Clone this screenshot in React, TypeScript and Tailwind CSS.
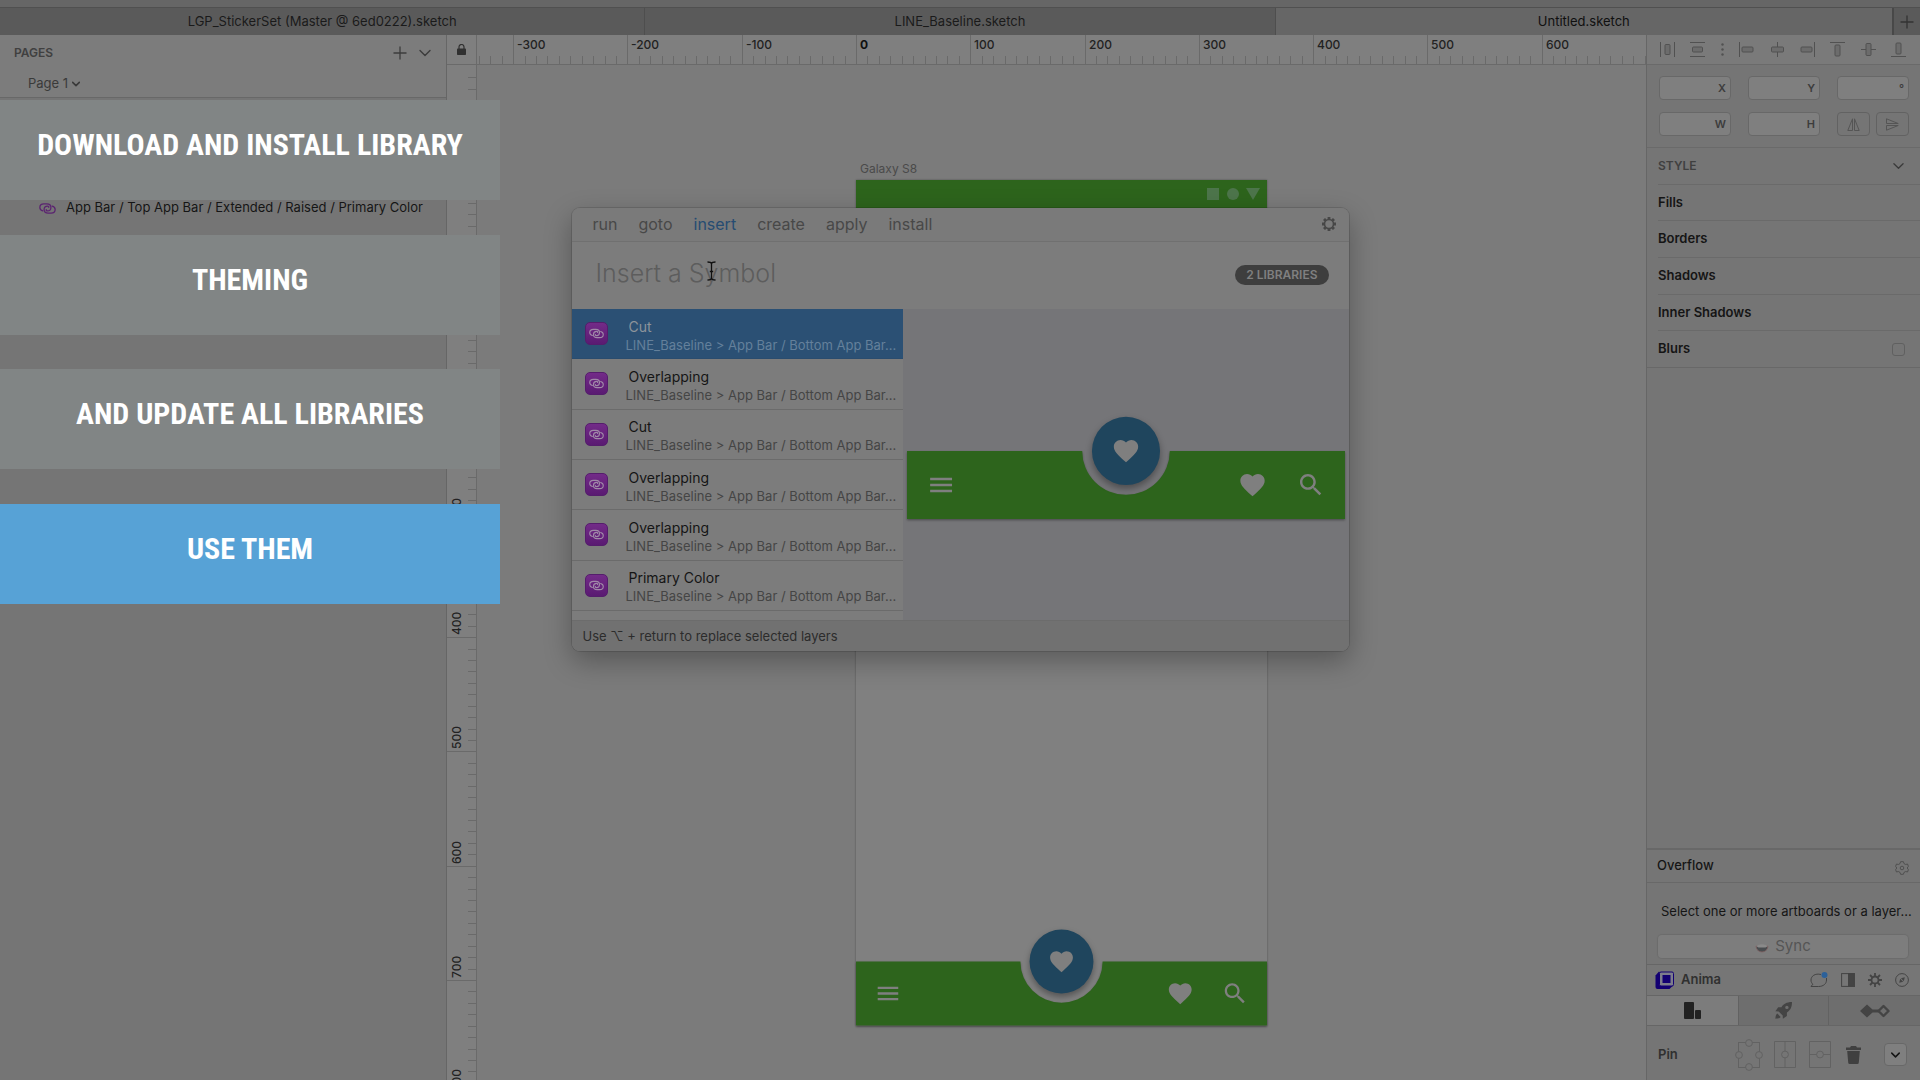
import React from "react";

const MENU = "M3 18h18v-2H3v2zm0-5h18v-2H3v2zm0-7v2h18V6H3z";
const HEART =
  "M12 21.35l-1.45-1.32C5.4 15.36 2 12.28 2 8.5 2 5.42 4.42 3 7.5 3c1.74 0 3.41.81 4.5 2.09C13.09 3.81 14.76 3 16.5 3 19.58 3 22 5.42 22 8.5c0 3.78-3.4 6.86-8.55 11.54L12 21.35z";
const SEARCH =
  "M15.5 14h-.79l-.28-.27C15.41 12.59 16 11.11 16 9.5 16 5.91 13.09 3 9.5 3S3 5.91 3 9.5 5.91 16 9.5 16c1.61 0 3.09-.59 4.23-1.57l.27.28v.79l5 4.99L20.49 19l-4.99-5zm-6 0C7.01 14 5 11.99 5 9.5S7.01 5 9.5 5 14 7.01 14 9.5 11.99 14 9.5 14z";

function BottomAppBar() {
  return (
    <svg viewBox="0 -32 360 92" className="block w-full overflow-visible" role="img" aria-label="Bottom app bar">
      <path
        d="M0 0H144A36 36 0 0 0 216 0H360V56H0Z"
        fill="#2d641c"
        className="drop-shadow-[0_1px_1px_rgba(0,0,0,0.35)]"
      />
      <circle r="28" cx="180" cy="0" fill="#1f455d" className="drop-shadow-[0_3px_3px_rgba(0,0,0,0.35)]" />
      <g fill="#7f7f7f">
        <path d={HEART} transform="translate(168 -12)" />
        <path d={MENU} transform="translate(16 16)" />
        <path d={HEART} transform="translate(272 16)" />
        <path d={SEARCH} transform="translate(320 16)" />
      </g>
    </svg>
  );
}

const LINK_LOOP = "M4.500 9.200C2.300 8.600 1 7 1 5.200C1 2.800 3 1 5.800 1H9.200C12 1 14 2.800 14 5.200C14 7.600 12.200 9.300 10 9.300C8.800 9.300 8.300 8.600 8.500 7.800";

function LinkGlyph({ className }: { className: string }) {
  return (
    <svg viewBox="0 0 20 13" className={className} fill="none" stroke="currentColor" strokeWidth="1.500" strokeLinecap="round">
      <path d={LINK_LOOP} />
      <path d={LINK_LOOP} transform="rotate(180 10 6.500)" />
    </svg>
  );
}

function Chevron({ className, width = 1.4 }: { className: string; width?: number }) {
  return (
    <svg viewBox="0 0 12 8" className={className} fill="none" stroke="currentColor" strokeWidth={width} strokeLinecap="round" strokeLinejoin="round">
      <path d="M1 1.500L6 6.500L11 1.500" />
    </svg>
  );
}

function Plus({ className }: { className: string }) {
  return (
    <svg viewBox="0 0 14 14" className={className} fill="none" stroke="currentColor" strokeWidth="1.300">
      <path d="M7 .5V13.500M.5 7H13.500" />
    </svg>
  );
}

const STEP = 800 / 7;

function TopRuler() {
  const zero = 379;
  const marks: React.ReactNode[] = [];
  for (let i = -33; i <= 69; i++) {
    const x = Math.round(zero + (i * STEP) / 10);
    const major = i % 10 === 0;
    marks.push(<line key={i} x1={x + 0.5} x2={x + 0.5} y1={major ? 0 : 21} y2={29} stroke="#6a6a6a" />);
    if (major) {
      marks.push(
        <text key={"t" + i} x={x + 4} y="14" fontSize="12" fontWeight={i === 0 ? 700 : 500} fill={i === 0 ? "#101010" : "#222"}>
          {i * 10}
        </text>
      );
    }
  }
  return <svg className="block h-[29px] w-full">{marks}</svg>;
}

function SideRuler() {
  const zero = 115;
  const marks: React.ReactNode[] = [];
  for (let i = -9; i <= 84; i++) {
    const y = Math.round(zero + (i * STEP) / 10);
    const major = i % 10 === 0;
    marks.push(<line key={i} y1={y + 0.5} y2={y + 0.5} x1={major ? 0 : 21} x2={29} stroke="#6a6a6a" />);
    if (major) {
      marks.push(
        <text key={"t" + i} transform={`translate(14 ${y - 2}) rotate(-90)`} fontSize="12" fontWeight="500" fill="#222">
          {i * 10}
        </text>
      );
    }
  }
  return <svg className="block h-full w-[29px]">{marks}</svg>;
}

function Titlebar() {
  return (
    <header className="shrink-0">
      <div className="h-[7px] bg-[#666]" />
      <div className="flex h-7 border-t border-[#505050] bg-[#5a5a5a] text-[13px] text-[#1a1a1a]">
        <button className="flex-[645] border-r border-[#4e4e4e]">LGP_StickerSet (Master @ 6ed0222).sketch</button>
        <button className="flex-[630] border-r border-[#4e4e4e]">LINE_Baseline.sketch</button>
        <button className="flex-[617] bg-[#666] text-[#101010]">Untitled.sketch</button>
        <button aria-label="New tab" className="flex w-7 items-center justify-center border-l-2 border-[#484848] text-[#333]">
          <Plus className="size-3.5" />
        </button>
      </div>
    </header>
  );
}

function Sidebar() {
  return (
    <aside className="flex w-[447px] shrink-0 flex-col border-r border-[#666] bg-[#757575]">
      <div className="h-[63px] border-b border-[#686868] bg-[#7c7c7c]">
        <div className="flex h-9 items-center pr-[15px] pl-3.5 text-[#3c3c3c]">
          <h2 className="flex-1 text-[12px] font-semibold text-[#404040]">PAGES</h2>
          <button aria-label="Add page" className="mr-3">
            <Plus className="size-3.5" />
          </button>
          <button aria-label="Collapse pages">
            <Chevron className="h-2 w-3" />
          </button>
        </div>
        <button className="ml-7 flex h-[26px] items-center gap-1 text-[13px] text-[#3a3a3a]">
          Page 1 <Chevron className="h-1.5 w-2" width={2.4} />
        </button>
      </div>
      <div className="mt-[98px] flex h-6 items-center gap-2.5 pl-[39px] text-[13px] text-[#151515]">
        <LinkGlyph className="h-[13px] w-[17px] text-[#5b2370]" />
        App Bar / Top App Bar / Extended / Raised / Primary Color
      </div>
    </aside>
  );
}

function Canvas() {
  return (
    <main className="flex min-w-0 flex-1 bg-[#7b7b7b]">
      <div className="flex w-[30px] shrink-0 flex-col border-r border-[#6a6a6a] bg-[#7f7f7f]">
        <div className="flex h-[30px] shrink-0 items-center justify-center border-b border-[#6a6a6a]">
          <svg viewBox="0 0 9 11" className="h-[11px] w-[9px]" role="img" aria-label="Locked">
            <rect y="4.500" width="9" height="6.500" rx=".8" fill="#303030" />
            <path d="M2 5V3a2.500 2.500 0 0 1 5 0v2" fill="none" stroke="#303030" strokeWidth="1.200" />
          </svg>
        </div>
        <SideRuler />
      </div>
      <div className="flex min-w-0 flex-1 flex-col">
        <div className="h-[30px] shrink-0 border-b border-[#6a6a6a] bg-[#7f7f7f]">
          <TopRuler />
        </div>
        <div className="flex flex-1 flex-col items-center pt-24">
          <section className="w-[411px]">
            <h3 className="h-[19px] pl-1 text-[12px] leading-4 text-[#4a4a4a]">Galaxy S8</h3>
            <div className="flex h-[846px] flex-col bg-[#808080] shadow-[0_0_2px_rgba(0,0,0,0.35)]">
              <div className="flex h-7 items-start justify-end bg-[#2d641c] pt-2 pr-[7px]">
                <svg viewBox="0 0 54 12" className="h-3 w-[54px]" fill="#4d754b" role="img" aria-label="Status icons">
                  <rect x="1" y="0" width="12" height="12" />
                  <circle cx="27" cy="6" r="6" />
                  <path d="M40 0H54L47 12Z" />
                </svg>
              </div>
              <div className="-mb-1 mt-auto">
                <BottomAppBar />
              </div>
            </div>
          </section>
        </div>
      </div>
    </main>
  );
}

function Field({ label }: { label: string }) {
  return (
    <label className="flex h-6 w-[72px] items-center rounded border border-[#686868] bg-[#7f7f7f] pr-1 text-[11px] font-semibold text-[#3c3c3c]">
      <input className="w-full min-w-0 bg-transparent outline-none" aria-label={label} />
      {label}
    </label>
  );
}

const ALIGN: [string, React.ReactNode][] = [
  ["Distribute horizontally", <g key="a"><path d="M.5 0V15M14.500 0V15" /><rect x="5" y="2.500" width="5" height="10" rx="1" fill="#6c6c6c" /></g>],
  ["Distribute vertically", <g key="b"><path d="M0 .5H15M0 14.500H15" /><rect x="2.500" y="5" width="10" height="5" rx="1" fill="#6c6c6c" /></g>],
  ["Align left", <g key="c"><path d="M.5 0V15" /><rect x="3" y="5" width="11" height="5" rx="1" fill="#6c6c6c" /></g>],
  ["Align center", <g key="d"><path d="M7.500 0V15" /><rect x="1.500" y="5" width="12" height="5" rx="1" fill="#6c6c6c" /></g>],
  ["Align right", <g key="e"><path d="M14.500 0V15" /><rect x="1" y="5" width="11" height="5" rx="1" fill="#6c6c6c" /></g>],
  ["Align top", <g key="f"><path d="M0 .5H15" /><rect x="5" y="3" width="5" height="11" rx="1" fill="#6c6c6c" /></g>],
  ["Align middle", <g key="g"><path d="M0 7.500H15" /><rect x="5" y="1.500" width="5" height="12" rx="1" fill="#6c6c6c" /></g>],
  ["Align bottom", <g key="h"><path d="M0 14.500H15" /><rect x="5" y="1" width="5" height="11" rx="1" fill="#6c6c6c" /></g>],
];

function AlignButton({ item }: { item: [string, React.ReactNode] }) {
  return (
    <button aria-label={item[0]}>
      <svg viewBox="0 0 15 15" className="size-[15px]" fill="none" stroke="#515151" strokeWidth="1">
        {item[1]}
      </svg>
    </button>
  );
}

function Inspector() {
  return (
    <aside className="flex w-[274px] shrink-0 flex-col border-l border-[#666] bg-[#757575] text-[#151515]">
      <div className="flex h-[30px] shrink-0 items-center justify-between border-b border-[#6a6a6a] bg-[#7a7a7a] pr-3.5 pl-[13px]">
        <AlignButton item={ALIGN[0]} />
        <AlignButton item={ALIGN[1]} />
        <svg viewBox="0 0 3 13" className="h-[13px] w-[3px]" fill="#515151">
          <circle cx="1.500" cy="1.500" r="1.200" />
          <circle cx="1.500" cy="6.500" r="1.200" />
          <circle cx="1.500" cy="11.500" r="1.200" />
        </svg>
        {ALIGN.slice(2).map((a) => (
          <AlignButton key={a[0]} item={a} />
        ))}
      </div>
      <div className="grid shrink-0 grid-cols-3 justify-items-start gap-x-[17px] gap-y-3 border-b border-[#6a6a6a] py-[11px] pr-[11px] pl-3">
        <Field label="X" />
        <Field label="Y" />
        <Field label="°" />
        <Field label="W" />
        <Field label="H" />
        <div className="flex gap-1.5">
          <button aria-label="Flip horizontally" className="flex h-6 w-[33px] items-center justify-center rounded border border-[#626262]">
            <svg viewBox="0 0 13 13" className="size-[13px]" fill="none" stroke="#555">
              <path d="M5.500 .8V12.500H.8ZM7.500 .8V12.500H12.200Z" />
            </svg>
          </button>
          <button aria-label="Flip vertically" className="flex h-6 w-[33px] items-center justify-center rounded border border-[#626262]">
            <svg viewBox="0 0 13 13" className="size-[13px]" fill="none" stroke="#555">
              <path d="M.5 .8V5.500H12.200ZM.5 12.200V7.500H12.200Z" />
            </svg>
          </button>
        </div>
      </div>
      <div className="flex h-[220px] shrink-0 flex-col border-b border-[#686868] pl-[11px]">
        <div className="flex flex-1 items-center justify-between border-b border-[#6a6a6a] pr-4">
          <h2 className="text-[12px] font-semibold text-[#404040]">STYLE</h2>
          <button aria-label="Collapse style" className="text-[#3a3a3a]">
            <Chevron className="h-2 w-[11px]" />
          </button>
        </div>
        {["Fills", "Borders", "Shadows", "Inner Shadows"].map((s) => (
          <div key={s} className="flex flex-1 items-center border-b border-[#6a6a6a] text-[13px] font-semibold">
            {s}
          </div>
        ))}
        <label className="flex flex-1 items-center justify-between pr-[15px] text-[13px] font-semibold">
          Blurs
          <input type="checkbox" className="size-[13px] appearance-none rounded-[3px] border border-[#606060]" />
        </label>
      </div>

      <div className="mt-auto flex h-[35px] shrink-0 items-center justify-between border-t-2 border-b border-[#686868] pr-[11px] pl-2.5">
        <h2 className="text-[13px] font-medium">Overflow</h2>
        <button aria-label="Overflow settings">
          <svg viewBox="0 0 14 14" className="mt-1 size-3.5" fill="none" stroke="#505050">
            <path d="M5.600 .7H8.400L9 2.600L10.700 3.500L12.500 3L13.400 5.300L12.200 7L13.400 8.700L12.500 11L10.700 10.500L9 11.400L8.400 13.300H5.600L5 11.400L3.300 10.500L1.500 11L.6 8.700L1.800 7L.6 5.300L1.500 3L3.300 3.500L5 2.600Z" strokeLinejoin="round" />
            <circle cx="7" cy="7" r="1.800" />
          </svg>
        </button>
      </div>
      <div className="flex h-[82px] shrink-0 flex-col justify-between border-b border-[#666] pt-[19px] pr-3 pb-1.5 pl-[11px]">
        <p className="pl-[3px] text-[13px] whitespace-nowrap">Select one or more artboards or a layer...</p>
        <button className="flex h-[23px] items-center justify-center gap-1.5 rounded bg-[#7d7d7d] text-[15px] text-[#555] shadow-[0_0_1px_1px_rgba(0,0,0,0.08)]">
          <svg viewBox="0 0 14 12" className="h-3 w-3.5">
            <path d="M1 5A6 6 0 0 0 13 5Z" fill="#494d50" stroke="#806060" strokeWidth=".8" />
            <path d="M1 5Q7 1.500 13 5L10.500 6.500H3.500Z" fill="#8a8a8a" />
          </svg>
          Sync
        </button>
      </div>
      <div className="flex h-[31px] shrink-0 items-center gap-[13px] border-b border-[#666] bg-[#767676] pr-[11px] pl-2">
        <svg viewBox="0 0 19 19" className="size-[19px]" role="img" aria-label="Anima logo">
          <path d="M4 .5L.5 4.500V16A2 2 0 0 0 2.500 18H14.500L18 14.500Z" fill="#130072" />
          <rect x="4.500" y="1" width="14" height="14" rx="1.500" fill="#7d7d8c" stroke="#130072" />
          <rect x="7.500" y="4" width="8" height="8" fill="#130072" />
        </svg>
        <h2 className="-ml-1.5 flex-1 text-[13px] font-semibold text-[#303030]">Anima</h2>
        <button aria-label="Messages">
          <svg viewBox="0 0 18 16" className="h-4 w-[18px]" fill="none" stroke="#444">
            <path d="M11 2.500C5 1 1 4.200 1 8c0 2 .9 3.200 1.800 4.200L1 14.500h7.500c5 0 8-2.800 8-6.500V6" />
            <circle cx="14.500" cy="3" r="3" fill="#2c619a" stroke="none" />
          </svg>
        </button>
        <button aria-label="Toggle panel">
          <svg viewBox="0 0 14 14" className="size-3.5" stroke="#444">
            <rect x=".6" y=".6" width="12.800" height="12.800" fill="none" />
            <rect x="7.500" y=".6" width="5.900" height="12.800" fill="#444" />
          </svg>
        </button>
        <button aria-label="Settings">
          <svg viewBox="0 0 14 14" className="size-3.5" fill="none" stroke="#444">
            <circle cx="7" cy="7" r="3.500" strokeWidth="1.800" />
            <path d="M7 0V3.500M7 10.500V14M0 7H3.500M10.500 7H14M2 2L4.500 4.500M9.500 9.500L12 12M2 12L4.500 9.500M9.500 4.500L12 2" strokeWidth="1.800" />
          </svg>
        </button>
        <button aria-label="Explore">
          <svg viewBox="0 0 14 14" className="size-3.5" fill="none" stroke="#444">
            <circle cx="7" cy="7" r="6.400" />
            <path d="M9.800 4.200L8.800 8.200L6 5.200ZM4.200 9.800L5.200 5.800L8.200 8.800Z" fill="#444" stroke="none" />
          </svg>
        </button>
      </div>
      <div className="grid h-[30px] shrink-0 grid-cols-3 border-b border-[#666] bg-[#6e6e6e]">
        <button aria-label="Layout" className="flex items-center justify-center bg-[#7c7c7c]">
          <svg viewBox="0 0 17 17" className="size-[17px]" fill="#222">
            <rect width="10" height="17" rx="1" />
            <rect x="11" y="8" width="6" height="9" rx="1" />
          </svg>
        </button>
        <button aria-label="Launch" className="flex items-center justify-center border-x border-[#626262]">
          <svg viewBox="0 0 17 17" className="size-[17px]" fill="#444">
            <path fillRule="evenodd" d="M17 0C11.500 0 8.300 2.200 6.500 5.200H3.200L.4 9.200l3.300.2 4 4 .2 3.300 4-2.800v-3.400C15 8.700 17 5.500 17 0ZM11.900 3.700a1.700 1.700 0 1 1 0 3.400 1.700 1.700 0 0 1 0-3.400Z" />
            <path d="M2.300 11.500C.8 12.600.5 14.500.4 16.800c2.300-.1 4.200-.4 5.300-1.900Z" />
          </svg>
        </button>
        <button aria-label="Flow" className="flex items-center justify-center">
          <svg viewBox="0 0 30 14" className="h-3.5 w-[30px]">
            <path d="M0 7L7 .5L12.500 5.500H19.500V8.500H12.500L7 13.500Z" fill="#444" />
            <path d="M23.500 2L28.500 7L23.500 12L18.500 7Z" fill="none" stroke="#444" strokeWidth="2.400" strokeLinejoin="round" />
          </svg>
        </button>
      </div>
      <div className="flex h-[54px] shrink-0 items-center pt-[3px] pr-[13px] pl-[11px]">
        <h2 className="flex-1 text-[13px] font-semibold text-[#303030]">Pin</h2>
        <div className="flex items-center gap-[11px]">
          <button aria-label="Pin edges">
            <svg viewBox="0 0 28 32" className="h-8 w-7" stroke="#626262" fill="#757575">
              <rect x="3.500" y="3.500" width="21" height="25" />
              <circle cx="14" cy="4" r="3.400" />
              <circle cx="14" cy="28" r="3.400" />
              <circle cx="4" cy="16" r="3.400" />
              <circle cx="24" cy="16" r="3.400" />
            </svg>
          </button>
          <button aria-label="Pin horizontal center">
            <svg viewBox="0 0 22 27" className="h-[27px] w-[22px]" stroke="#626262" fill="#757575">
              <path d="M.5 .5H21.500V26.500H.5ZM11 .5V26.500" />
              <circle cx="11" cy="13.500" r="3.400" />
            </svg>
          </button>
          <button aria-label="Pin vertical center" className="ml-0.5">
            <svg viewBox="0 0 22 27" className="h-[27px] w-[22px]" stroke="#626262" fill="#757575">
              <path d="M.5 .5H21.500V26.500H.5ZM.5 13.500H21.500" />
              <circle cx="11" cy="13.500" r="3.400" />
            </svg>
          </button>
          <button aria-label="Delete pins" className="ml-1">
            <svg viewBox="0 0 15 18" className="h-[18px] w-[15px]" fill="#404040">
              <path d="M5 0h5l1 1.500h4V4H0V1.500h4ZM1.200 5h12.600l-1 11.500a1.500 1.500 0 0 1-1.500 1.500H3.700a1.500 1.500 0 0 1-1.500-1.500Z" />
            </svg>
          </button>
          <button aria-label="More pin options" className="ml-3 flex size-[23px] items-center justify-center rounded border border-[#686868] bg-[#7f7f7f] text-[#151515]">
            <Chevron className="h-1.5 w-[9px]" width={2} />
          </button>
        </div>
      </div>
    </aside>
  );
}

const RESULTS = ["Cut", "Overlapping", "Cut", "Overlapping", "Overlapping", "Primary Color"];

function Runner() {
  return (
    <div className="absolute inset-x-0 top-[208px] flex justify-center">
      <section
        aria-label="Insert a symbol"
        className="relative w-[777px] overflow-hidden rounded-lg bg-[#7c7c7c] shadow-[0_0_0_1px_rgba(0,0,0,0.12),0_10px_28px_rgba(0,0,0,0.3)]"
      >
        <nav className="flex h-[34px] items-center gap-[21px] border-b border-[#707070] bg-[#7a7a7a] pr-[13px] pb-0.5 pl-[21px] text-[16px] text-[#484848]">
          <a href="#run">run</a>
          <a href="#goto">goto</a>
          <a href="#insert" className="text-[#264c72]">insert</a>
          <a href="#create">create</a>
          <a href="#apply">apply</a>
          <a href="#install">install</a>
          <button aria-label="Runner settings" className="ml-auto">
            <svg viewBox="0 0 14 14" className="size-3.5" fill="none" stroke="#474747">
              <circle cx="7" cy="7" r="4.500" strokeWidth="1.600" />
              <path d="M7 0V2.200M7 11.800V14M0 7H2.200M11.800 7H14M2 2L3.600 3.600M10.400 10.400L12 12M2 12L3.600 10.400M10.400 3.600L12 2" strokeWidth="2.800" />
            </svg>
          </button>
        </nav>
        <div className="flex h-[67px] items-center pr-5 pb-0.5 pl-6">
          <input
            aria-label="Symbol name"
            placeholder="Insert a Symbol"
            className="min-w-0 flex-1 bg-transparent pb-0.5 text-[25px] font-light outline-none placeholder:text-[#5d5d5d]"
          />
          <span className="flex h-5 items-center rounded-full bg-[#3e3e3e] px-[11px] text-[12px] font-semibold text-[#808080]">2 LIBRARIES</span>
        </div>
        <svg viewBox="0 0 9 20" className="absolute top-[53px] left-[135px] h-5 w-[9px]" fill="none" stroke="#101010" strokeWidth="1.300">
          <path d="M.5 1C3 1 4.500 1.500 4.500 3V17C4.500 18.500 3 19 .5 19M8.500 1C6 1 4.500 1.500 4.500 3M4.500 17C4.500 18.500 6 19 8.500 19M2.800 10.500H6.200" />
        </svg>
        <div className="flex h-[311px] bg-[#757578]">
          <div className="w-[331px] shrink-0 bg-[#7c7c7c]">
            <ul className="flex h-[302px] flex-col">
              {RESULTS.map((name, i) => (
                <li
                  key={i}
                  className={
                    i === 0
                      ? "flex flex-1 items-center border-b border-[#2a4c6e] bg-[#2b5074] text-[#8d949b]"
                      : "flex flex-1 items-center border-b border-[#6b6b6b] text-[#151515]"
                  }
                >
                  <span className="mr-[18px] ml-[13px] flex size-[23px] shrink-0 items-center justify-center rounded-[5px] border border-[#551d6c] bg-linear-to-b from-[#732b88] to-[#5a1a72] text-[#a08aa8]">
                    <LinkGlyph className="h-[11px] w-[15px]" />
                  </span>
                  <span className="min-w-0 flex-1 pt-[5px]">
                    <span className="block pl-[3px] text-[14px] leading-[18px]">{name}</span>
                    <span className={i === 0 ? "block text-[13px] leading-[19px] text-[#64809b]" : "block text-[13px] leading-[19px] text-[#454545]"}>
                      LINE_Baseline &gt; App Bar / Bottom App Bar...
                    </span>
                  </span>
                </li>
              ))}
            </ul>
          </div>
          <div className="flex flex-1 items-center px-1 pt-1.5">
            <BottomAppBar />
          </div>
        </div>
        <footer className="h-[31px] border-t border-[#6c6c6c] bg-[#717171] pl-[11px] text-[13px] leading-[31px] text-[#2c2c2c]">
          Use ⌥ + return to replace selected layers
        </footer>
      </section>
    </div>
  );
}

const STEPS = ["DOWNLOAD AND INSTALL LIBRARY", "THEMING", "AND UPDATE ALL LIBRARIES", "USE THEM"];

function Steps() {
  return (
    <ol className="absolute top-[100px] left-0 flex h-[504px] w-[500px] flex-col justify-between text-center font-['Roboto_Condensed','Open_Sans_Condensed','Liberation_Sans_Narrow','Roboto',sans-serif] text-[30px] font-bold text-white">
      {STEPS.map((s, i) => (
        <li key={s} className={i === 3 ? "h-[100px] bg-[#57a2d6] leading-[90px]" : "h-[100px] bg-[#818585] leading-[90px]"}>
          {s}
        </li>
      ))}
    </ol>
  );
}

export default function App() {
  return (
    <div className="relative flex h-screen flex-col overflow-hidden bg-[#7b7b7b] font-['Inter',sans-serif]">
      <Titlebar />
      <div className="flex min-h-0 flex-1">
        <Sidebar />
        <Canvas />
        <Inspector />
      </div>
      <Runner />
      <Steps />
    </div>
  );
}
